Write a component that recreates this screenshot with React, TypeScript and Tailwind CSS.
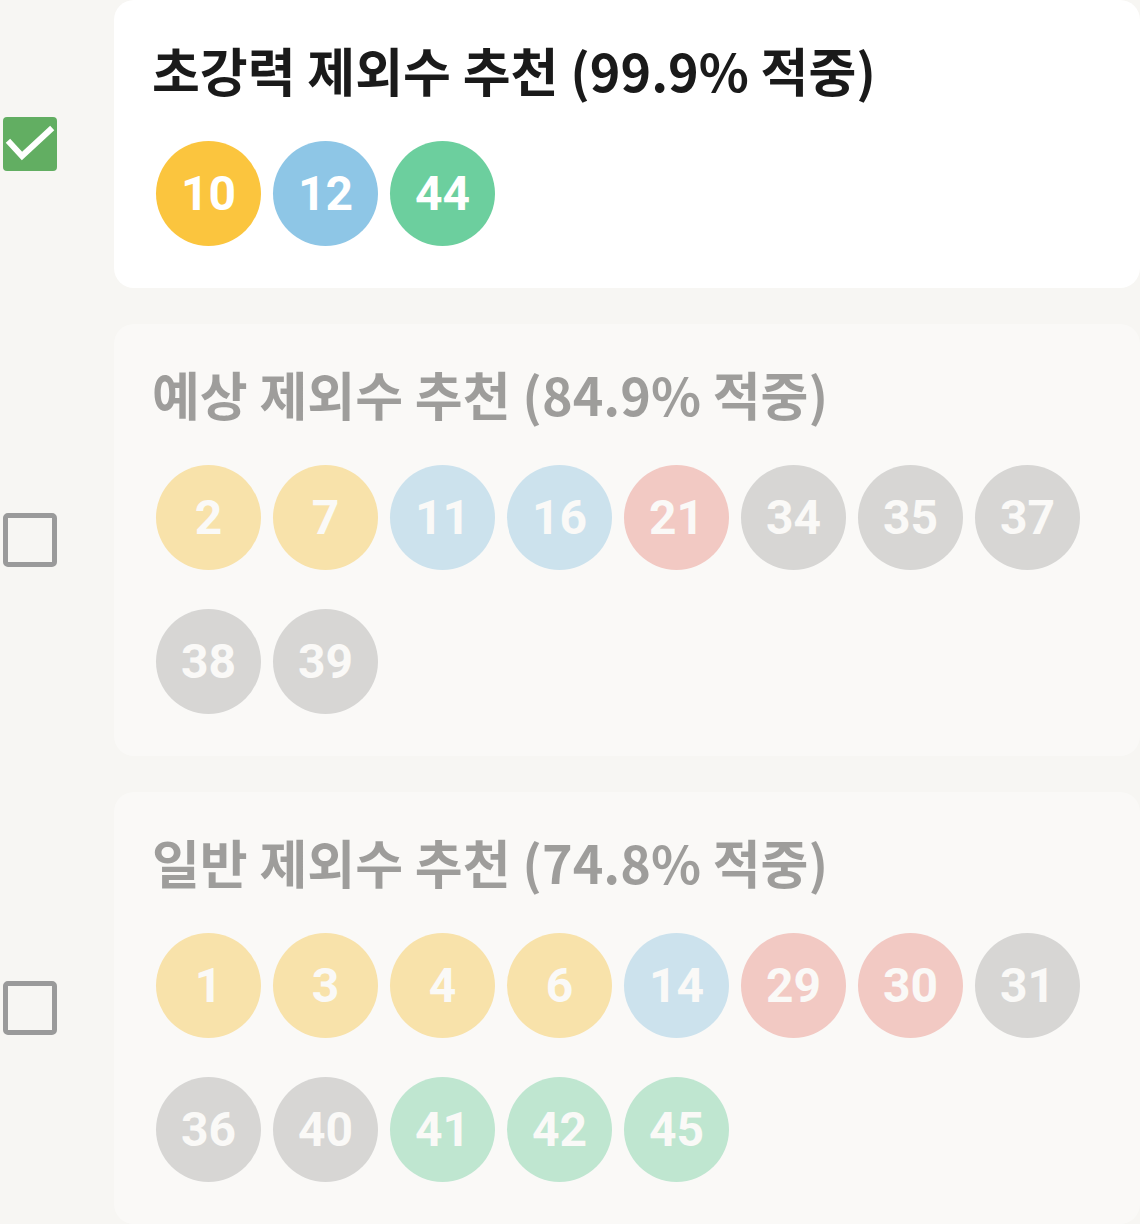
import React from 'react'

interface Group {
  title: string
  numbers: number[]
  checked: boolean
}

const groups: Group[] = [
  { title: '초강력 제외수 추천 (99.9% 적중)', numbers: [10, 12, 44], checked: true },
  { title: '예상 제외수 추천 (84.9% 적중)', numbers: [2, 7, 11, 16, 21, 34, 35, 37, 38, 39], checked: false },
  { title: '일반 제외수 추천 (74.8% 적중)', numbers: [1, 3, 4, 6, 14, 29, 30, 31, 36, 40, 41, 42, 45], checked: false },
]

function ballColor(n: number) {
  if (n <= 10) return 'bg-[#fbc53e]'
  if (n <= 20) return 'bg-[#8ec6e6]'
  if (n <= 30) return 'bg-[#ed877d]'
  if (n <= 40) return 'bg-[#a8a8a8]'
  return 'bg-[#6ccf9e]'
}

function Ball({ n }: { n: number }) {
  return (
    <div
      className={`${ballColor(n)} w-[105px] h-[105px] rounded-full flex items-center justify-center text-white text-[48px] font-bold leading-none`}
      style={{ fontFamily: 'Roboto, sans-serif' }}
    >
      {n}
    </div>
  )
}

function Checkbox({ checked }: { checked: boolean }) {
  if (checked) {
    return (
      <div className="w-[54px] h-[54px] rounded-[4px] bg-[#62ae62] flex items-center justify-center">
        <svg width="54" height="54" viewBox="0 0 54 54" fill="none">
          <polyline points="7,26 19,39 47,13" stroke="white" strokeWidth="6" strokeLinecap="square" />
        </svg>
      </div>
    )
  }
  return <div className="w-[54px] h-[54px] rounded-[5px] border-[5px] border-[#9a9a9a]" />
}

export default function App() {
  return (
    <div
      className="w-[1140px] min-h-screen bg-[#f7f6f3] flex flex-col gap-[36px]"
      style={{ fontFamily: '"Noto Sans CJK KR", "Noto Sans", sans-serif' }}
    >
      {groups.map(g => (
        <div key={g.title} className="flex items-center">
          <div className="w-[114px] shrink-0 pl-[3px]">
            <Checkbox checked={g.checked} />
          </div>
          <div className={`flex-1 rounded-[20px] bg-white pl-[42px] pr-[20px] pt-[37px] pb-[42px] ${g.checked ? '' : 'opacity-40'}`}>
            <div className="text-[52px] font-bold leading-[65px] text-[#1a1a1a] -ml-[4px]">{g.title}</div>
            <div className="mt-[39px] flex flex-wrap gap-x-[12px] gap-y-[39px]">
              {g.numbers.map(n => (
                <Ball key={n} n={n} />
              ))}
            </div>
          </div>
        </div>
      ))}
    </div>
  )
}
